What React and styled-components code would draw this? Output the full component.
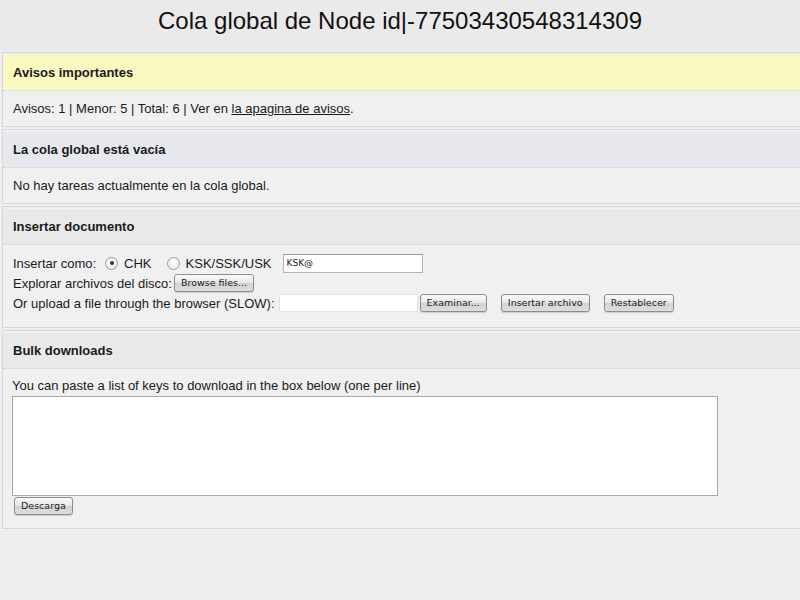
import React from "react";
import styled, { createGlobalStyle } from "styled-components";

const GlobalStyle = createGlobalStyle`
  html, body {
    margin: 0;
    padding: 0;
    background: #efefef;
    font-family: "Liberation Sans", Arial, sans-serif;
    color: #1a1a1a;
    overflow: hidden;
  }
`;

function App() {
  return (
    <>
      <GlobalStyle />
      <Page>
        <Title>Cola global de Node id|-77503430548314309</Title>

        <Box>
          <Header tone="alert">Avisos importantes</Header>
          <Content>
            Avisos: 1 | Menor: 5 | Total: 6 | Ver en <Link>la apagina de avisos</Link>.
          </Content>
        </Box>

        <Box>
          <Header tone="info">La cola global está vacía</Header>
          <Content>No hay tareas actualmente en la cola global.</Content>
        </Box>

        <Box>
          <Header>Insertar documento</Header>
          <FormContent>
            <Row>
              Insertar como:
              <Radio checked />
              <RadioLabel>CHK</RadioLabel>
              <Radio />
              <RadioLabel>KSK/SSK/USK</RadioLabel>
              <KeyInput defaultValue="KSK@" />
            </Row>
            <Row>
              Explorar archivos del disco:
              <MacButton>Browse files...</MacButton>
            </Row>
            <Row>
              Or upload a file through the browser (SLOW):
              <FileInput />
              <MacButton>Examinar...</MacButton>
              <MacButton gap={14}>Insertar archivo</MacButton>
              <MacButton gap={14}>Restablecer</MacButton>
            </Row>
          </FormContent>
        </Box>

        <Box>
          <Header>Bulk downloads</Header>
          <BulkContent>
            <div>You can paste a list of keys to download in the box below (one per line)</div>
            <KeysArea />
            <MacButton>Descarga</MacButton>
          </BulkContent>
        </Box>
      </Page>
    </>
  );
}

export default App;

const Page = styled.div`
  width: 800px;
  height: 600px;
  overflow: hidden;
  background: #efefef;
`;

const Title = styled.h1`
  margin: 0;
  height: 52px;
  background: #eaeaea;
  font-weight: normal;
  font-size: 24px;
  line-height: 42px;
  text-align: center;
  color: #111;
`;

const Box = styled.div`
  margin: 0 -6px 2px 2px;
  padding-top: 2px;
  border: 1px solid #d8d8d8;
  background: #f0f0f0;
`;

const headerBg = {
  alert: "#fbf9c2",
  info: "#e7e8ee",
};

const Header = styled.div`
  height: 35px;
  line-height: 35px;
  padding-left: 10px;
  font-size: 13px;
  font-weight: bold;
  background: ${(p) => headerBg[p.tone] || "#e9e9e9"};
  border-bottom: 1px dotted #cfcfcf;
`;

const Content = styled.div`
  height: 35px;
  line-height: 36px;
  padding-left: 10px;
  font-size: 13px;
`;

const Link = styled.span`
  text-decoration: underline;
`;

const FormContent = styled.div`
  padding: 8px 0 14px 10px;
  font-size: 13px;
`;

const Row = styled.div`
  display: flex;
  align-items: center;
  height: 20px;
`;

const Radio = styled.span`
  width: 11px;
  height: 11px;
  margin: 0 6px 0 9px;
  border-radius: 50%;
  border: 1px solid #9a9a9a;
  background: radial-gradient(circle at 50% 40%, #ffffff 0%, #e4e4e4 100%);
  display: flex;
  align-items: center;
  justify-content: center;
  &::after {
    content: "";
    width: 4px;
    height: 4px;
    border-radius: 50%;
    background: ${(p) => (p.checked ? "#333" : "transparent")};
  }
`;

const RadioLabel = styled.span`
  margin-right: 6px;
`;

const KeyInput = styled.input`
  margin-left: 5px;
  width: 132px;
  height: 15px;
  padding: 1px 3px;
  border: 1px solid #b4b4b4;
  border-top-color: #999;
  background: #fff;
  font-family: "DejaVu Sans", sans-serif;
  font-size: 9px;
  color: #222;
  outline: none;
`;

const FileInput = styled.input`
  margin-left: 4px;
  width: 131px;
  height: 16px;
  padding: 0 3px;
  border: 1px solid #e2e2e2;
  background: #fff;
  outline: none;
`;

const MacButton = styled.button`
  margin-left: ${(p) => (p.gap != null ? p.gap : 2)}px;
  height: 18px;
  padding: 0 6px;
  border: 1px solid #8c8c8c;
  border-radius: 3px;
  background: linear-gradient(#fbfbfb 0%, #e6e6e6 50%, #d2d2d2 51%, #dedede 100%);
  box-shadow: 0 1px 1px rgba(0, 0, 0, 0.15);
  font-family: "DejaVu Sans", sans-serif;
  font-size: 9.5px;
  color: #222;
  line-height: 16px;
`;

const BulkContent = styled.div`
  padding: 8px 0 13px 9px;
  font-size: 13px;
  line-height: 17px;
  display: flex;
  flex-direction: column;
  align-items: flex-start;

  ${MacButton} {
    margin: 1px 0 0 2px;
  }
`;

const KeysArea = styled.textarea`
  margin-top: 2px;
  width: 706px;
  height: 100px;
  box-sizing: border-box;
  border: 1px solid #a8a8a8;
  background: #fff;
  resize: none;
  outline: none;
`;
